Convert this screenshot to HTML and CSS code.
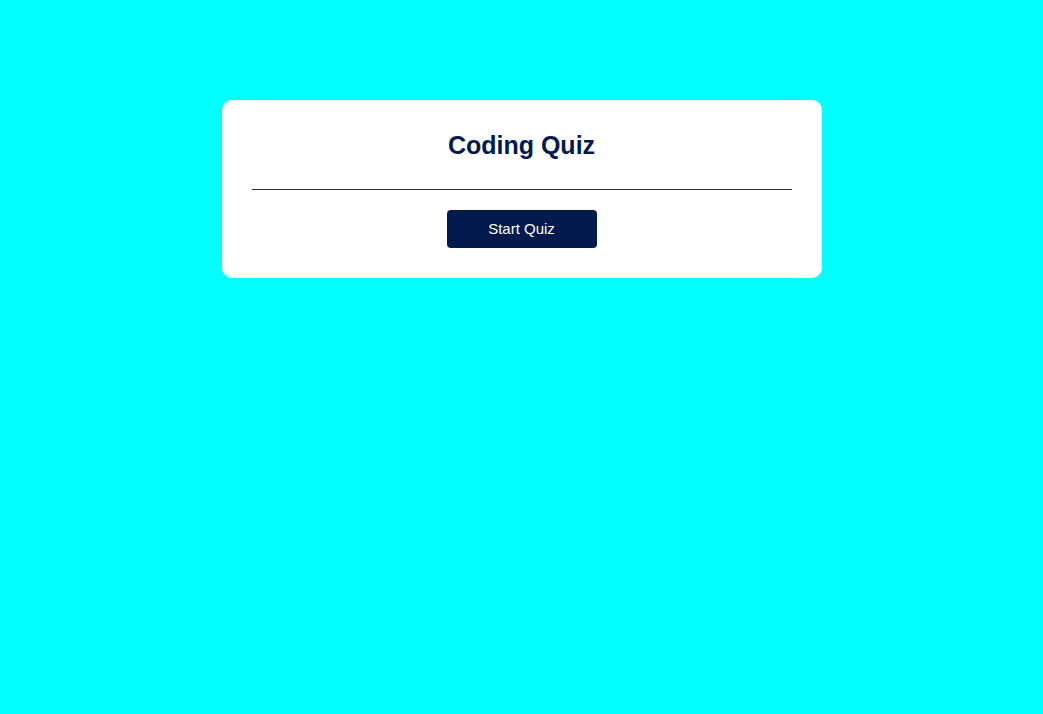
FILE: index.html
```html
<!DOCTYPE html>
<html>
<head>
<meta charset="utf-8">
<link rel="stylesheet" href="styles.css">
</head>
<body>
<main class="card">
  <h1 class="title">Coding Quiz</h1>
  <hr class="divider">
  <div class="actions">
    <button class="start-btn">Start Quiz</button>
  </div>
</main>
</body>
</html>
```

FILE: styles.css
```css
html, body {
  margin: 0;
  padding: 0;
}
body {
  background: #00ffff;
  font-family: "Liberation Sans", Arial, sans-serif;
  min-height: 714px;
  padding-top: 100px;
  box-sizing: border-box;
}
.card {
  width: 600px;
  margin: 0 auto;
  background: #fff;
  border-radius: 10px;
  padding: 30px;
  box-sizing: border-box;
  display: flex;
  flex-direction: column;
}
.title {
  margin: 0;
  font-size: 25px;
  line-height: 30px;
  font-weight: bold;
  color: #001a4d;
  text-align: center;
}
.divider {
  margin: 29px 0 20px;
  border: 0;
  border-top: 1px solid #333;
  height: 0;
}
.actions {
  display: flex;
  justify-content: center;
}
.start-btn {
  width: 150px;
  height: 38px;
  padding: 0 0 2px;
  background: #001a4d;
  color: #fff;
  border: 0;
  border-radius: 4px;
  font-family: "Liberation Sans", Arial, sans-serif;
  font-size: 15px;
  cursor: pointer;
}
```
